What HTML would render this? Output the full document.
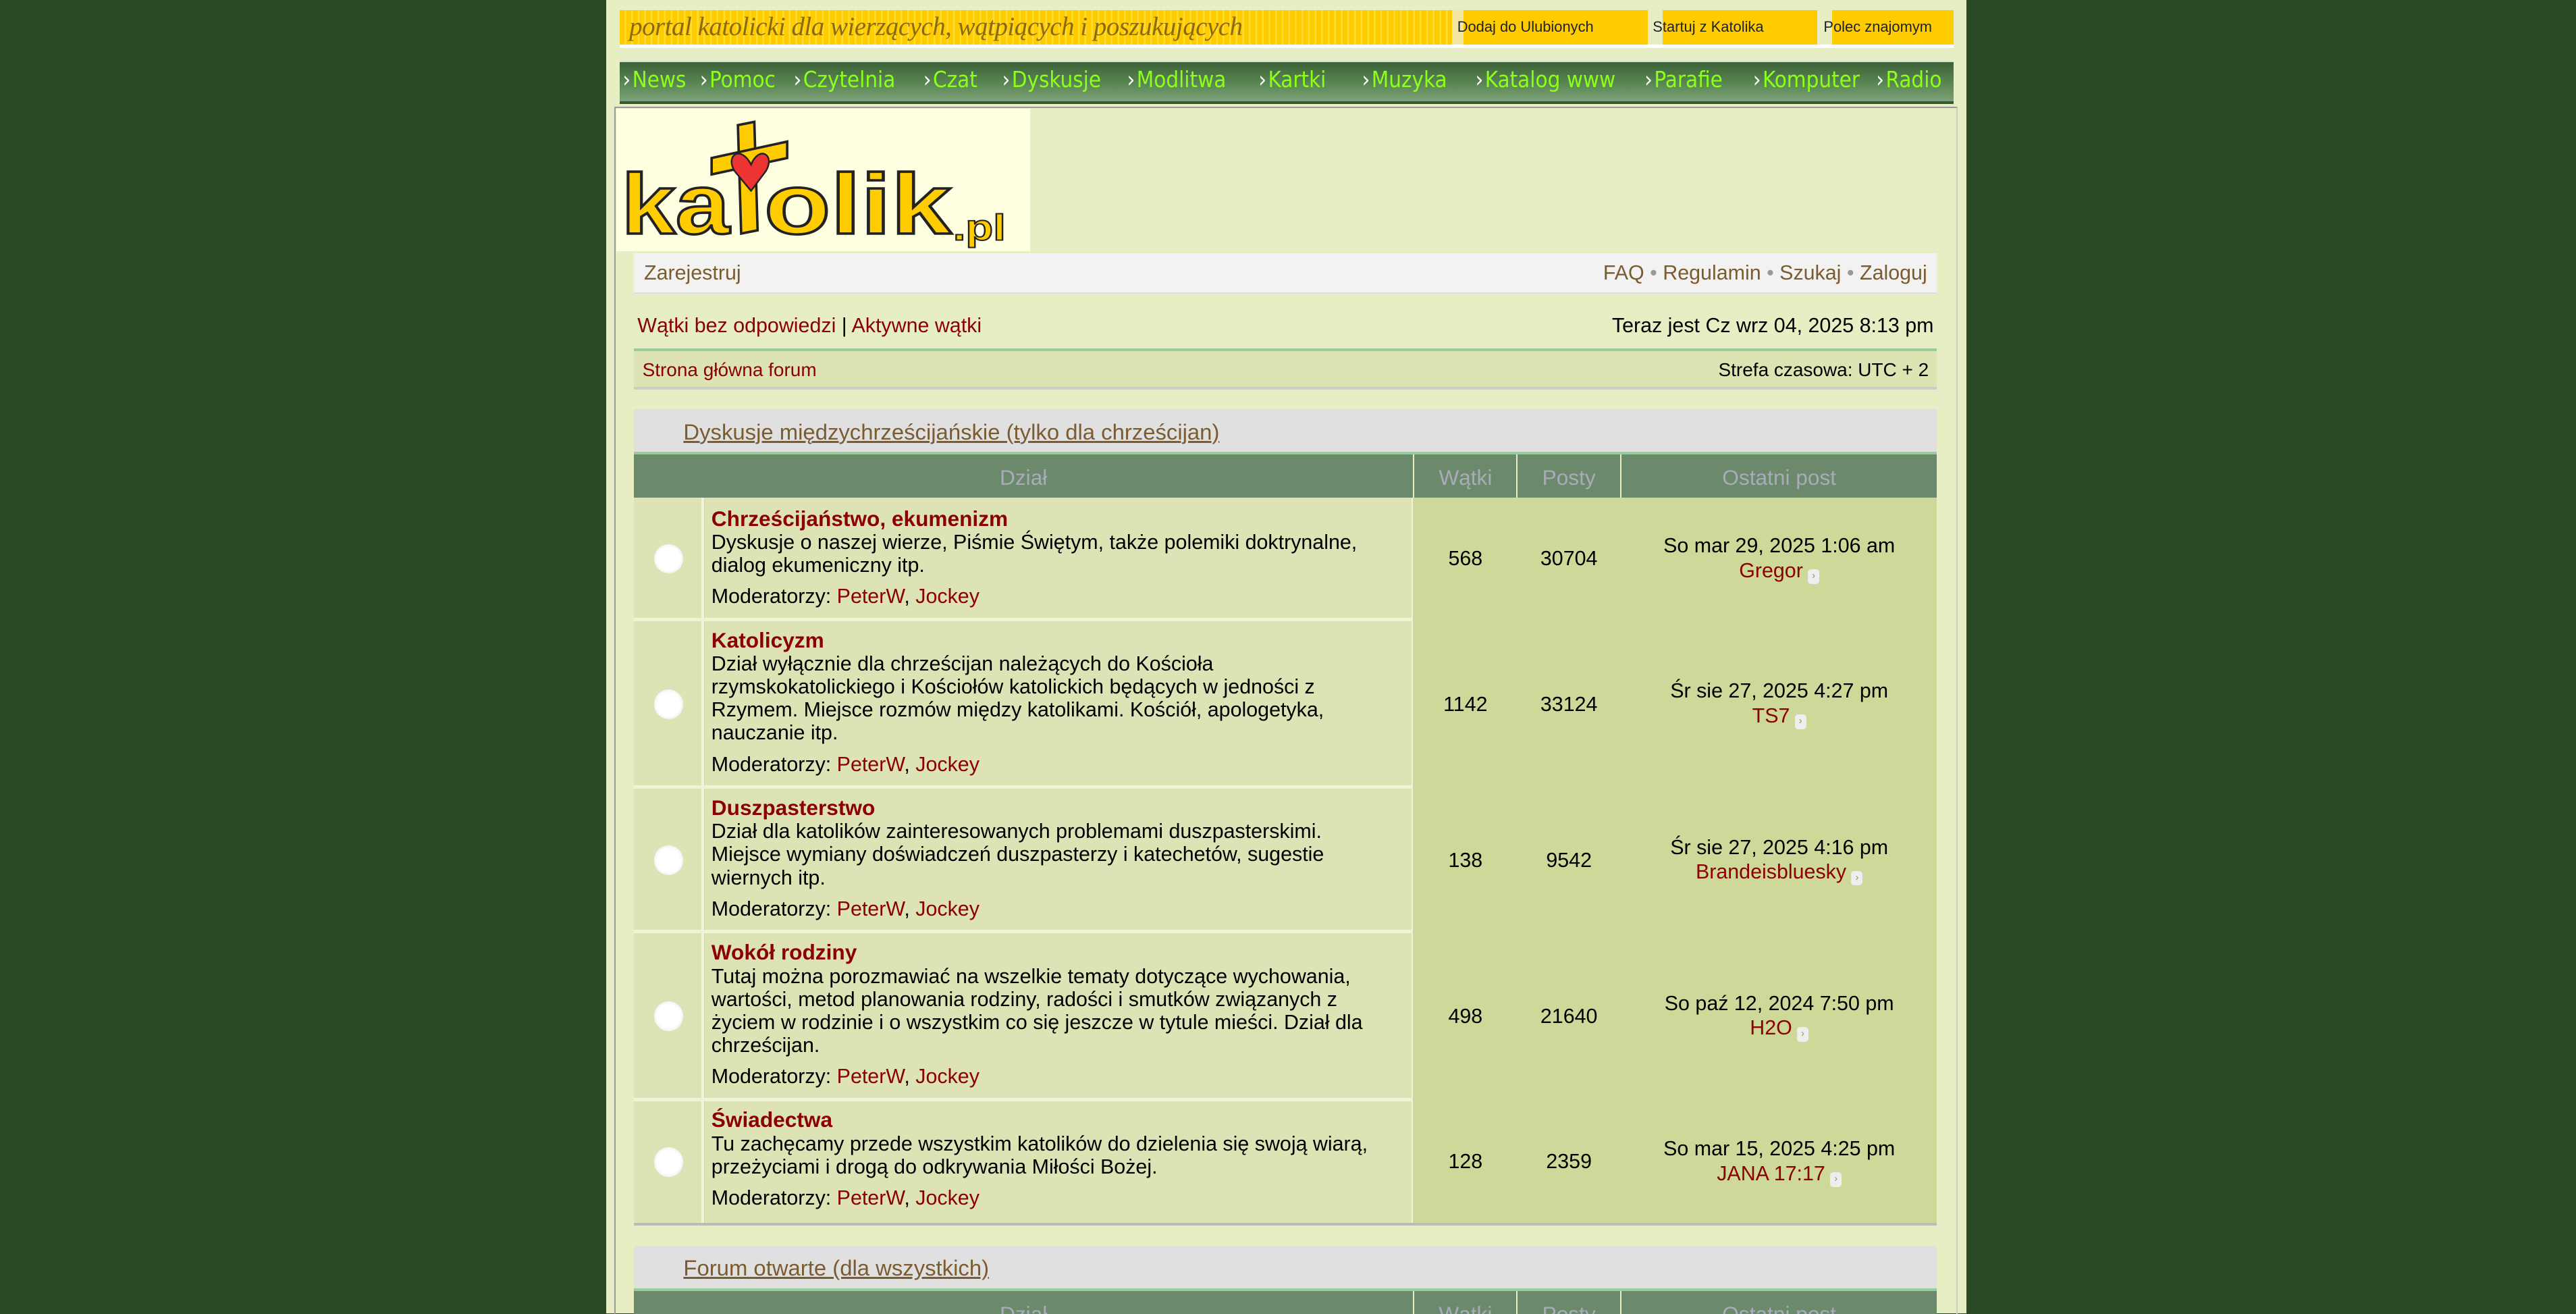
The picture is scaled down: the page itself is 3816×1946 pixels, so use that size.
<!DOCTYPE html>
<html><head><meta charset="utf-8">
<style>
html{zoom:2.4337;height:799px;overflow:hidden;background:#294a24}
body{margin:0;width:1568px;height:799px;background:#294a24;font-family:"Liberation Sans",sans-serif;position:relative;overflow:hidden;color:#000}
.a{position:absolute}
#wrap{left:369px;top:0;width:828px;height:799px;background:#e7eec4}
.ban{background:#fc0;height:21px;top:6px}
.nav{top:37px;left:377px;width:812px;height:24px;background:linear-gradient(#3c6236,#5d8a56 60%,#7fa07a);border-top:1px solid #ddd;border-bottom:2px solid #365a30;font-family:"DejaVu Sans Condensed","Liberation Sans Narrow",sans-serif;font-size:13.5px;color:#8cff1a;white-space:nowrap}
.nav span{position:absolute;top:3px}
.nav b{color:#fff;font-weight:normal;margin-right:1px}
#main{left:374px;top:65px;width:816px;height:740px;border:1px solid #999;border-right-color:#ccc;border-bottom:0}
.row{left:386px;width:793px;font-size:12.5px}
.link{color:#8b0000}
.cathd{background:#e0e0e0;height:26px}
.cathd a{position:absolute;left:30px;top:6px;color:#7a5c30;text-decoration:underline;font-size:13.5px}
.th{background:#6b8a6b;color:#aab;height:26px;border-top:2px solid #9c9;font-size:13px}
.th div{position:absolute;top:0;height:26px;line-height:28px;text-align:center;border-right:1px solid #e7eec4}
.fr{left:386px;width:793px}
.ic{position:absolute;left:0;width:41px;top:0;bottom:0;background:#dde3b5;border-right:2px solid #f0f4d8}
.ic i{position:absolute;left:12px;top:50%;margin-top:-9px;width:18px;height:18px;border-radius:50%;background:radial-gradient(#fff 55%,#ddd)}
.tx{position:absolute;left:43px;width:431px;top:0;bottom:0;background:#dde3b5;border-right:1px solid #f0f4d8;font-size:12.5px;line-height:14px;padding:4px 0 0 4px;box-sizing:border-box;white-space:nowrap}
.tx .t{color:#8b0000;font-weight:bold;font-size:13px;line-height:15px}
.tx .m{margin-top:5px}
.st{position:absolute;top:0;bottom:0;background:#ced898;text-align:center;font-size:12.5px;display:flex;align-items:center;justify-content:center;flex-direction:column;line-height:15px}
.sep{position:absolute;left:0;width:474px;height:2px;background:#eef3d6}
.go{display:inline-block;width:7px;height:9px;background:#eee;border-radius:2px;margin-left:3px;vertical-align:-1px;font-size:6px;color:#a85;line-height:9px}
</style></head><body>
<div id="wrap" class="a"></div>
<div class="a ban" style="left:377px;width:507px;background:repeating-linear-gradient(90deg,#fc0 0 3px,#fd3 3px 4px)"><span style="position:absolute;left:6px;top:1px;font-family:'Liberation Serif',serif;font-style:italic;font-size:16px;color:#8a6a10;letter-spacing:-0.2px">portal katolicki dla wierzących, wątpiących i poszukujących</span></div>
<div class="a" style="left:377px;top:27px;width:812px;height:2px;background:#fff"></div>
<div class="a ban" style="left:884px;width:7px;background:#f3e6a0"></div>
<div class="a ban" style="left:891px;width:112px"><span style="position:absolute;left:-4px;top:5px;font-size:9px;color:#222">Dodaj do Ulubionych</span></div>
<div class="a ban" style="left:1012px;width:94px"><span style="position:absolute;left:-6px;top:5px;font-size:9px;color:#222">Startuj z Katolika</span></div>
<div class="a ban" style="left:1115px;width:74px"><span style="position:absolute;left:-5px;top:5px;font-size:9px;color:#222">Polec znajomym</span></div>
<div class="a nav">
<span style="left:2px"><b>›</b>News</span><span style="left:49px"><b>›</b>Pomoc</span><span style="left:106px"><b>›</b>Czytelnia</span><span style="left:185px"><b>›</b>Czat</span><span style="left:233px"><b>›</b>Dyskusje</span><span style="left:309px"><b>›</b>Modlitwa</span><span style="left:389px"><b>›</b>Kartki</span><span style="left:452px"><b>›</b>Muzyka</span><span style="left:521px"><b>›</b>Katalog www</span><span style="left:624px"><b>›</b>Parafie</span><span style="left:690px"><b>›</b>Komputer</span><span style="left:765px"><b>›</b>Radio</span>
</div>
<div id="main" class="a"></div>
<div class="a" style="left:375px;top:66px;width:252px;height:87px;background:#fefee0">
<svg width="252" height="87" viewBox="0 0 252 87">
<g stroke="#222" stroke-width="1.5" fill="#fc0">
<path d="M74 10 L84 8 L86 74 L76 76 Z"/><path d="M58 30 L104 20 L104 30 L58 40 Z"/>
</g>
<path d="M82 34 C76 22 66 28 72 38 L82 50 L91 38 C97 28 87 22 82 34Z" fill="#e33" stroke="#222"/>
<text x="3" y="76" font-family="Liberation Sans,sans-serif" font-weight="bold" font-size="52" fill="#fc0" stroke="#222" stroke-width="1.5" textLength="66" lengthAdjust="spacingAndGlyphs">ka</text>
<text x="90" y="76" font-family="Liberation Sans,sans-serif" font-weight="bold" font-size="52" fill="#fc0" stroke="#222" stroke-width="1.5" textLength="114" lengthAdjust="spacingAndGlyphs">olik</text>
<text x="205" y="80" font-family="Liberation Sans,sans-serif" font-weight="bold" font-size="22" fill="#fc0" stroke="#222" stroke-width="0.8" textLength="32" lengthAdjust="spacingAndGlyphs">.pl</text>
</svg></div>
<div class="a row" style="top:154px;height:24px;background:#f2f2f2;border-bottom:1px solid #ddd;color:#7a5c30;font-size:12.5px">
<span class="a" style="left:6px;top:5px">Zarejestruj</span>
<span class="a" style="right:6px;top:5px;white-space:nowrap">FAQ <span style="color:#999">•</span> Regulamin <span style="color:#999">•</span> Szukaj <span style="color:#999">•</span> Zaloguj</span>
</div>
<div class="a row" style="top:191px">
<span class="a link" style="left:2px;white-space:nowrap">Wątki bez odpowiedzi <span style="color:#000">|</span> Aktywne wątki</span>
<span class="a" style="right:2px;white-space:nowrap">Teraz jest Cz wrz 04, 2025 8:13 pm</span>
</div>
<div class="a row" style="top:212px;height:22px;background:#dde3b3;border-top:2px solid #9c9;border-bottom:2px solid #ccc;font-size:11.5px">
<span class="a link" style="left:5px;top:5px">Strona główna forum</span>
<span class="a" style="right:5px;top:5px">Strefa czasowa: UTC + 2</span>
</div>

<div class="a row cathd" style="top:249px"><a>Dyskusje międzychrześcijańskie (tylko dla chrześcijan)</a></div>
<div class="a row th" style="top:275px">
<div style="left:0;width:474px">Dział</div><div style="left:475px;width:62px">Wątki</div><div style="left:538px;width:62px">Posty</div><div style="left:601px;width:192px;border:0">Ostatni post</div>
</div>
<div class="a" style="left:386px;top:303px;width:793px;height:441px;background:#ced898;border-bottom:2px solid #bbb"></div>

<div class="a fr" style="top:303px;height:74px">
<div class="ic"><i></i></div>
<div class="tx" style="padding-top:5px"><div class="t">Chrześcijaństwo, ekumenizm</div>Dyskusje o naszej wierze, Piśmie Świętym, także polemiki doktrynalne,<br>dialog ekumeniczny itp.<div class="m">Moderatorzy: <span class="link">PeterW</span>, <span class="link">Jockey</span></div></div>
<div class="st" style="left:475px;width:62px">568</div><div class="st" style="left:538px;width:62px">30704</div>
<div class="st" style="left:601px;width:192px">So mar 29, 2025 1:06 am<span class="link">Gregor<span class="go">›</span></span></div>
</div>
<div class="a sep" style="left:386px;top:376px"></div>
<div class="a fr" style="top:378px;height:101px">
<div class="ic"><i></i></div>
<div class="tx"><div class="t">Katolicyzm</div>Dział wyłącznie dla chrześcijan należących do Kościoła<br>rzymskokatolickiego i Kościołów katolickich będących w jedności z<br>Rzymem. Miejsce rozmów między katolikami. Kościół, apologetyka,<br>nauczanie itp.<div class="m">Moderatorzy: <span class="link">PeterW</span>, <span class="link">Jockey</span></div></div>
<div class="st" style="left:475px;width:62px">1142</div><div class="st" style="left:538px;width:62px">33124</div>
<div class="st" style="left:601px;width:192px">Śr sie 27, 2025 4:27 pm<span class="link">TS7<span class="go">›</span></span></div>
</div>
<div class="a sep" style="left:386px;top:478px"></div>
<div class="a fr" style="top:480px;height:87px">
<div class="ic"><i></i></div>
<div class="tx"><div class="t">Duszpasterstwo</div>Dział dla katolików zainteresowanych problemami duszpasterskimi.<br>Miejsce wymiany doświadczeń duszpasterzy i katechetów, sugestie<br>wiernych itp.<div class="m">Moderatorzy: <span class="link">PeterW</span>, <span class="link">Jockey</span></div></div>
<div class="st" style="left:475px;width:62px">138</div><div class="st" style="left:538px;width:62px">9542</div>
<div class="st" style="left:601px;width:192px">Śr sie 27, 2025 4:16 pm<span class="link">Brandeisbluesky<span class="go">›</span></span></div>
</div>
<div class="a sep" style="left:386px;top:566px"></div>
<div class="a fr" style="top:568px;height:101px">
<div class="ic"><i></i></div>
<div class="tx"><div class="t">Wokół rodziny</div>Tutaj można porozmawiać na wszelkie tematy dotyczące wychowania,<br>wartości, metod planowania rodziny, radości i smutków związanych z<br>życiem w rodzinie i o wszystkim co się jeszcze w tytule mieści. Dział dla<br>chrześcijan.<div class="m">Moderatorzy: <span class="link">PeterW</span>, <span class="link">Jockey</span></div></div>
<div class="st" style="left:475px;width:62px">498</div><div class="st" style="left:538px;width:62px">21640</div>
<div class="st" style="left:601px;width:192px">So paź 12, 2024 7:50 pm<span class="link">H2O<span class="go">›</span></span></div>
</div>
<div class="a sep" style="left:386px;top:668px"></div>
<div class="a fr" style="top:670px;height:74px">
<div class="ic"><i></i></div>
<div class="tx"><div class="t">Świadectwa</div>Tu zachęcamy przede wszystkim katolików do dzielenia się swoją wiarą,<br>przeżyciami i drogą do odkrywania Miłości Bożej.<div class="m">Moderatorzy: <span class="link">PeterW</span>, <span class="link">Jockey</span></div></div>
<div class="st" style="left:475px;width:62px">128</div><div class="st" style="left:538px;width:62px">2359</div>
<div class="st" style="left:601px;width:192px">So mar 15, 2025 4:25 pm<span class="link">JANA 17:17<span class="go">›</span></span></div>
</div>

<div class="a row cathd" style="top:758px"><a>Forum otwarte (dla wszystkich)</a></div>
<div class="a row th" style="top:784px;height:14px">
<div style="left:0;width:474px;height:14px">Dział</div><div style="left:475px;width:62px;height:14px">Wątki</div><div style="left:538px;width:62px;height:14px">Posty</div><div style="left:601px;width:192px;border:0;height:14px">Ostatni post</div>
</div>
</body></html>
